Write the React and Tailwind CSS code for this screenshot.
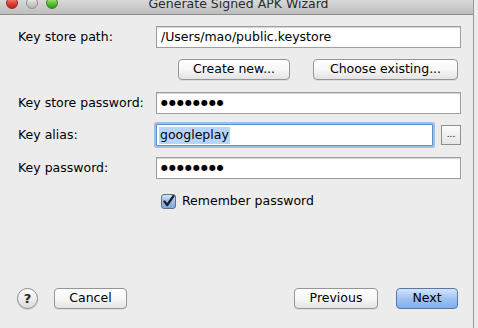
import React from 'react';

const font = { fontFamily: '"DejaVu Sans", "Liberation Sans", sans-serif' };

const Dots = () => (
  <span className="text-[8px] tracking-[1px] text-black leading-none">●●●●●●●●</span>
);

const Field = ({ children, className = '' }) => (
  <div
    className={`h-[22px] flex items-center bg-white border border-[#9e9e9e] shadow-[inset_0_1px_1px_rgba(0,0,0,0.18)] pl-[4px] text-[12.5px] text-black ${className}`}
  >
    {children}
  </div>
);

const Button = ({ children, className = '' }) => (
  <div
    className={`h-[21px] flex items-center justify-center rounded-[4px] border border-[#959595] bg-gradient-to-b from-white via-[#f7f7f7] to-[#e3e3e3] shadow-[0_1px_0_rgba(0,0,0,0.06)] text-[12.5px] text-black ${className}`}
  >
    {children}
  </div>
);

const Row = ({ label, children, className = '' }) => (
  <div className={`flex items-center ${className}`}>
    <div className="w-[138px] text-[12.5px] text-black">{label}</div>
    <div className="flex-1 flex items-center">{children}</div>
  </div>
);

export default function App() {
  return (
    <div className="w-[478px] h-[328px] flex bg-[#ebebeb] overflow-hidden" style={font}>
      <div className="w-[474px] h-full flex flex-col border-r border-[#9a9a9a] bg-[#ececec]">
        {/* title bar */}
        <div className="h-[15px] shrink-0 relative flex items-end justify-center bg-gradient-to-b from-[#d9d9d9] to-[#bdbdbd] border-b border-[#8d8d8d] overflow-hidden">
          <div className="absolute left-[6px] top-[-3px] flex gap-[8px]">
            <div className="w-[12px] h-[12px] rounded-full bg-gradient-to-b from-[#ff8c85] via-[#e0443c] to-[#c01f18] border border-[#9c2a24]" />
            <div className="w-[12px] h-[12px] rounded-full bg-gradient-to-b from-[#f4f4f4] via-[#d0d0d0] to-[#b5b5b5] border border-[#8f8f8f]" />
            <div className="w-[12px] h-[12px] rounded-full bg-gradient-to-b from-[#b9f08d] via-[#5fc43a] to-[#339b1d] border border-[#3a7f25]" />
          </div>
          <div className="text-[12.5px] leading-none text-[#2b2b2b] mb-[4px] ml-[4px]">Generate Signed APK Wizard</div>
        </div>

        <div className="flex-1 flex flex-col pl-[18px] pr-[12px]">
          <Row label="Key store path:" className="mt-[11px]">
            <Field className="flex-1">/Users/mao/public.keystore</Field>
          </Row>

          <div className="flex justify-end mt-[11px] pr-[3px] gap-[23px]">
            <Button className="w-[112px]">Create new...</Button>
            <Button className="w-[145px]">Choose existing...</Button>
          </div>

          <Row label="Key store password:" className="mt-[12px]">
            <Field className="flex-1"><Dots /></Field>
          </Row>

          <Row label="Key alias:" className="mt-[10px]">
            <div className="flex-1 h-[22px] flex items-center bg-white border border-[#5f8fcf] shadow-[0_0_0_2px_#9cc0ea] rounded-[1px] pl-[2px] text-[12.5px] text-black">
              <span className="bg-[#b5d5ff] px-[1px] h-[17px] flex items-center">googleplay</span>
            </div>
            <div className="ml-[8px] w-[20px] h-[20px] flex items-center justify-center border border-[#8f8f8f] bg-gradient-to-b from-[#fbfbfb] to-[#e6e6e6] text-[9px] text-black leading-none pb-[2px]">
              ...
            </div>
          </Row>

          <Row label="Key password:" className="mt-[11px]">
            <Field className="flex-1"><Dots /></Field>
          </Row>

          <div className="flex items-center mt-[13px] ml-[143px] gap-[6px]">
            <div className="w-[15px] h-[15px] rounded-[3px] border border-[#5d6f8a] bg-gradient-to-b from-[#d6e6fb] via-[#9dbde8] to-[#7ea8de] flex items-center justify-center">
              <svg width="13" height="13" viewBox="0 0 13 13">
                <path d="M2.5 6.5 L5.2 10 L11.5 1" fill="none" stroke="#1c2330" strokeWidth="2.3" strokeLinecap="round" strokeLinejoin="round" />
              </svg>
            </div>
            <span className="text-[12.5px] text-black">Remember password</span>
          </div>

          <div className="flex-1" />

          <div className="flex items-center mb-[19px] -ml-[1px] pr-[3px]">
            <div className="w-[21px] h-[21px] rounded-full border border-[#8c8c8c] bg-gradient-to-b from-white to-[#dcdcdc] flex items-center justify-center text-[13px] font-bold text-[#222] shadow-[0_1px_1px_rgba(0,0,0,0.15)]">
              ?
            </div>
            <Button className="ml-[16px] w-[73px]">Cancel</Button>
            <div className="flex-1" />
            <Button className="w-[84px]">Previous</Button>
            <div className="ml-[18px] w-[62px] h-[21px] flex items-center justify-center rounded-[4px] border border-[#5a77a8] bg-gradient-to-b from-[#d3e5fb] via-[#9fc3f1] to-[#7fb0ee] text-[12.5px] text-black">
              Next
            </div>
          </div>
        </div>
      </div>
    </div>
  );
}
